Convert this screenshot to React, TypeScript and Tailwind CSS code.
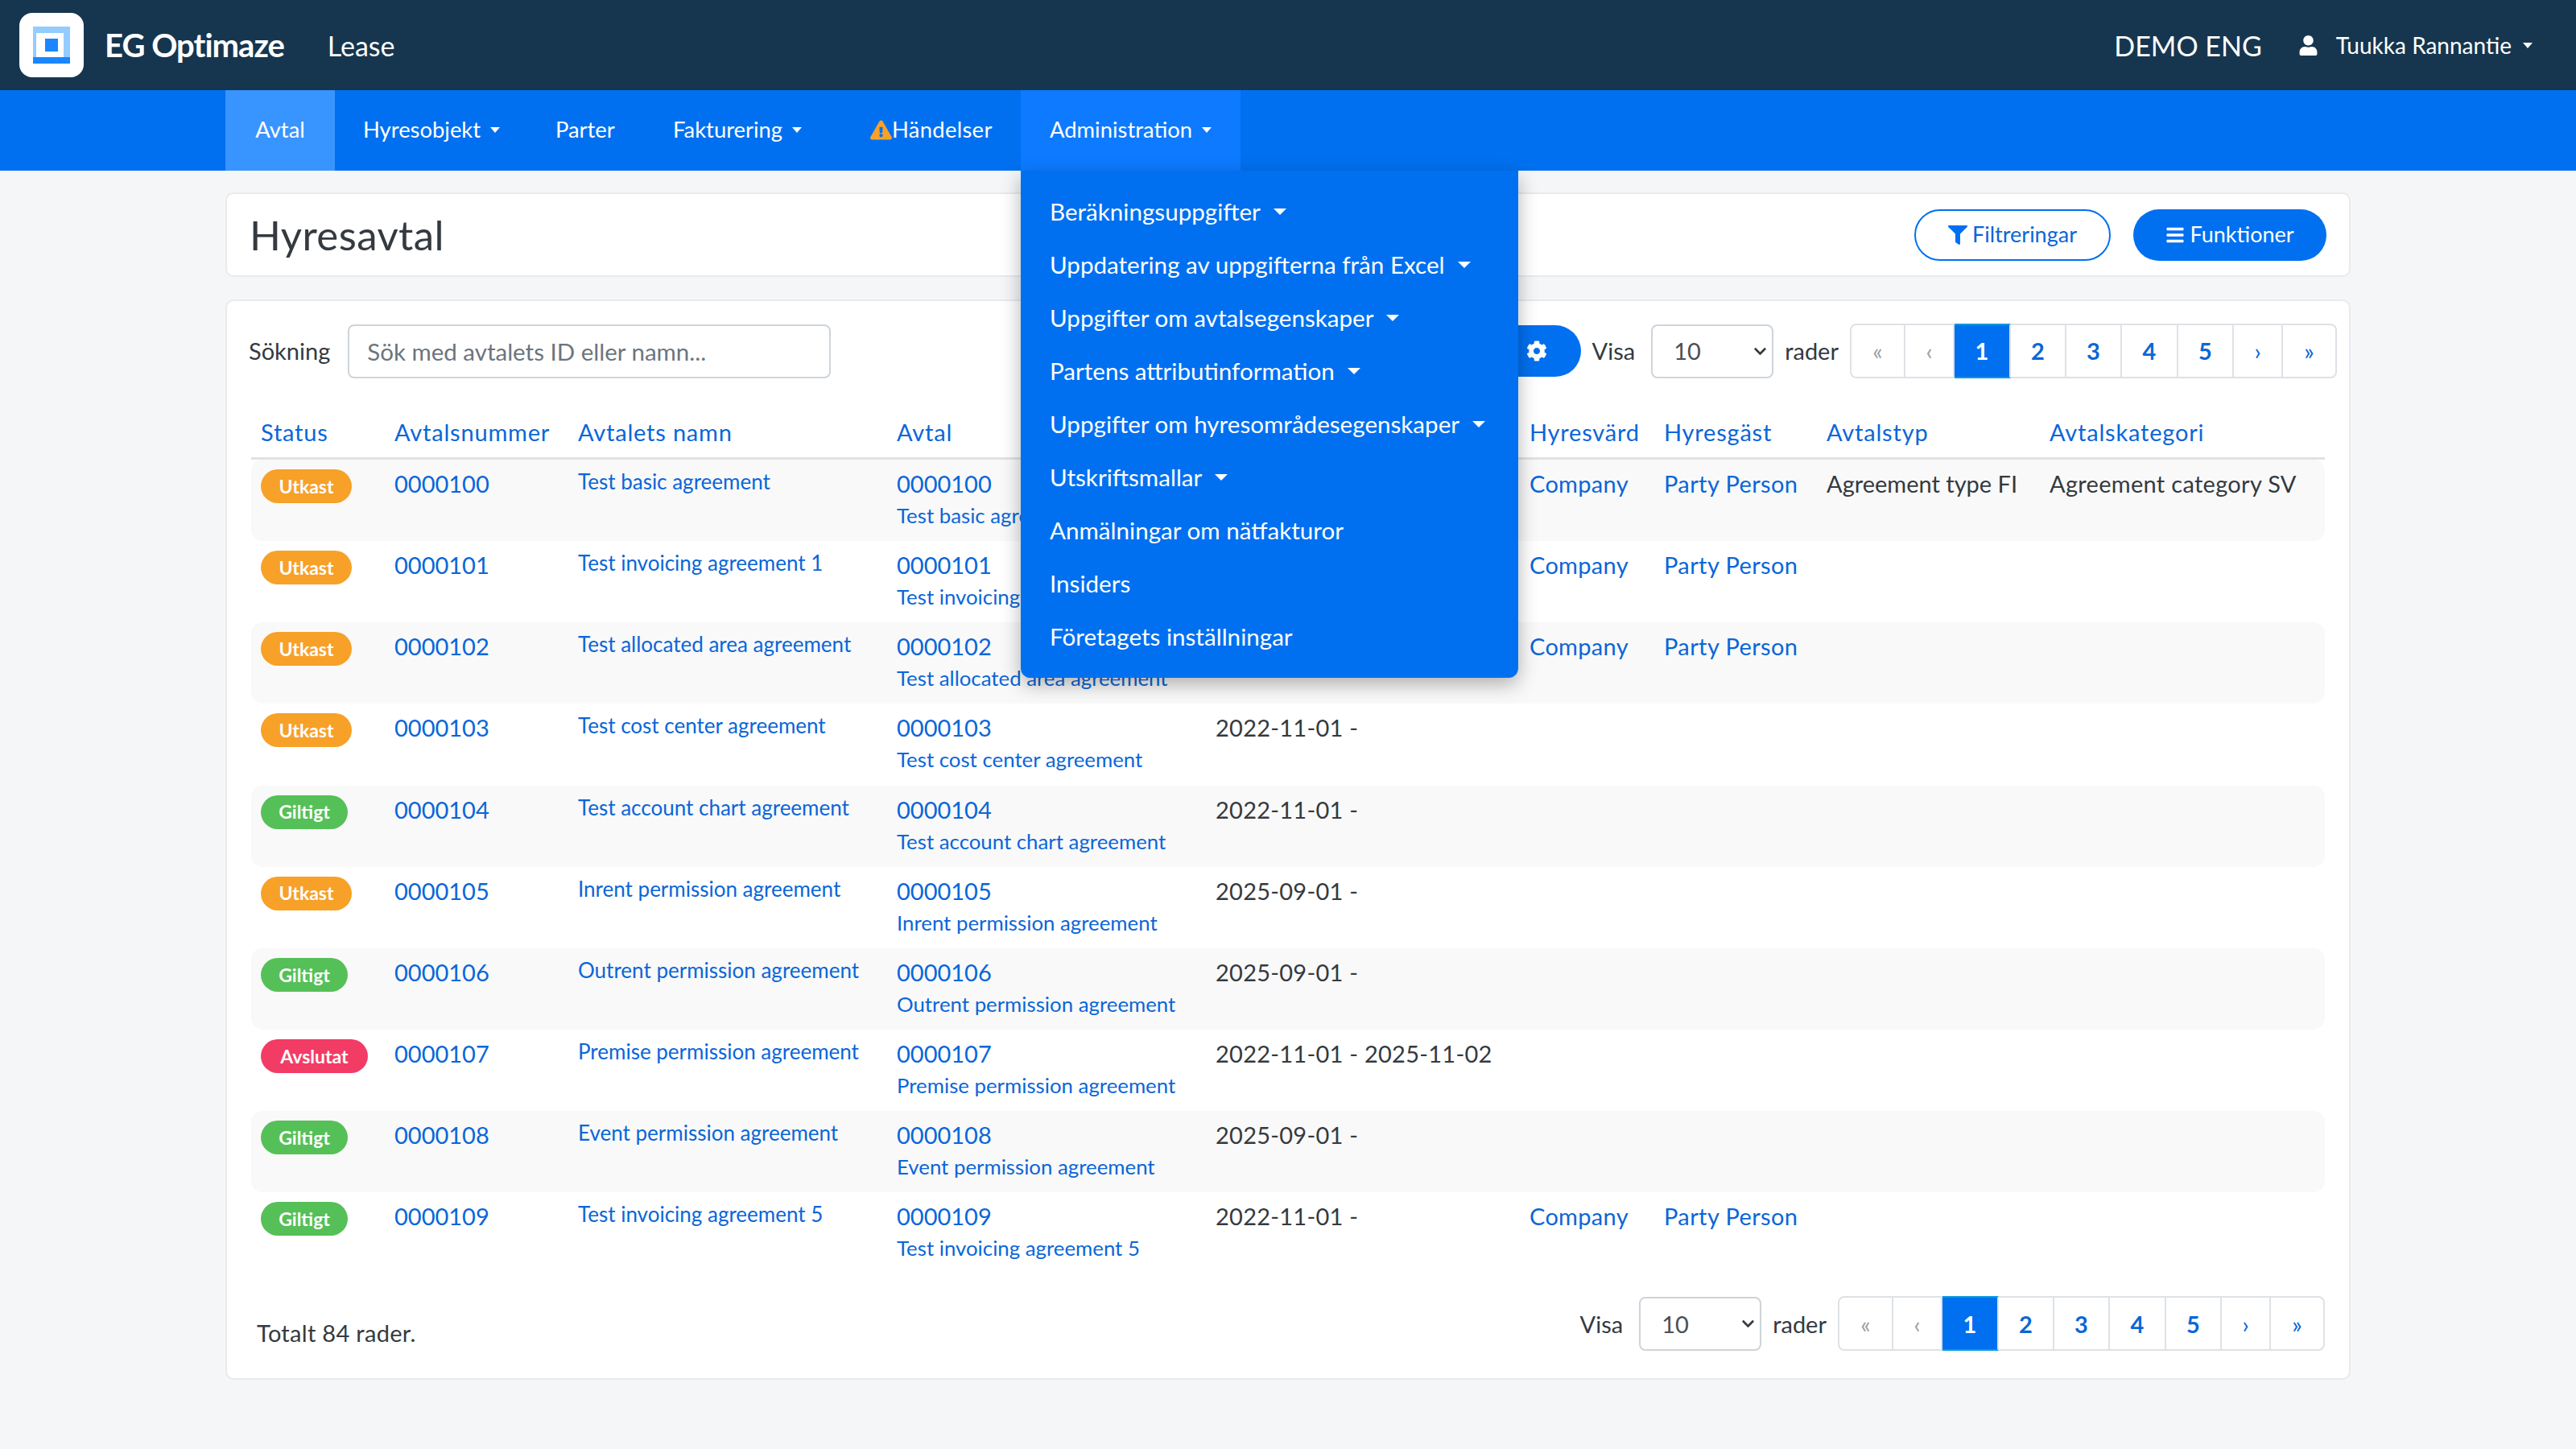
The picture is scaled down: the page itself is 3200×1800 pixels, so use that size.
import { FaCog, FaChevronDown, FaExclamationTriangle, FaFilter, FaUser, FaBars } from "react-icons/fa";

type Row = {
  status: "Utkast" | "Giltigt" | "Avslutat";
  id: string;
  name: string;
  period?: string;
  landlord?: boolean;
  type?: string;
  category?: string;
};

const rows: Row[] = [
  { status: "Utkast", id: "0000100", name: "Test basic agreement", landlord: true, type: "Agreement type FI", category: "Agreement category SV" },
  { status: "Utkast", id: "0000101", name: "Test invoicing agreement 1", landlord: true },
  { status: "Utkast", id: "0000102", name: "Test allocated area agreement", landlord: true },
  { status: "Utkast", id: "0000103", name: "Test cost center agreement", period: "2022-11-01 -" },
  { status: "Giltigt", id: "0000104", name: "Test account chart agreement", period: "2022-11-01 -" },
  { status: "Utkast", id: "0000105", name: "Inrent permission agreement", period: "2025-09-01 -" },
  { status: "Giltigt", id: "0000106", name: "Outrent permission agreement", period: "2025-09-01 -" },
  { status: "Avslutat", id: "0000107", name: "Premise permission agreement", period: "2022-11-01 - 2025-11-02" },
  { status: "Giltigt", id: "0000108", name: "Event permission agreement", period: "2025-09-01 -" },
  { status: "Giltigt", id: "0000109", name: "Test invoicing agreement 5", period: "2022-11-01 -", landlord: true },
];

const menuItems = [
  { label: "Beräkningsuppgifter", caret: true },
  { label: "Uppdatering av uppgifterna från Excel", caret: true },
  { label: "Uppgifter om avtalsegenskaper", caret: true },
  { label: "Partens attributinformation", caret: true },
  { label: "Uppgifter om hyresområdesegenskaper", caret: true },
  { label: "Utskriftsmallar", caret: true },
  { label: "Anmälningar om nätfakturor", caret: false },
  { label: "Insiders", caret: false },
  { label: "Företagets inställningar", caret: false },
];

const badgeColors = {
  Utkast: "bg-[#f7a128] w-[113px]",
  Giltigt: "bg-[#55c057] w-[108px]",
  Avslutat: "bg-[#f23c65] w-[133px]",
};

const gridCols = "grid grid-cols-[166px_228px_396px_396px_390px_167px_202px_277px_354px]";

function Caret({ className = "ml-[12px] border-x-[6px] border-t-[7px]" }: { className?: string }) {
  return <span className={`inline-block border-x-transparent border-t-white align-middle ${className}`} />;
}

function RowsSelect() {
  return (
    <div className="relative">
      <select defaultValue="10" className="h-[67px] w-[152px] appearance-none rounded-[8px] border-2 border-[#ced4da] bg-white pl-[26px] text-[29px] text-[#495057]">
        <option>10</option>
        <option>25</option>
        <option>50</option>
      </select>
      <FaChevronDown className="pointer-events-none absolute right-[8px] top-[25px] text-[17px] text-[#343a40]" />
    </div>
  );
}

function Pagination() {
  const cells = [
    { t: "«", w: "w-[67px]", c: "text-[#9aa0a6]" },
    { t: "‹", w: "w-[61px]", c: "text-[#9aa0a6]" },
    { t: "1", w: "w-[70px]", c: "-my-[2px] border-y-2 border-y-[#0a9be0] bg-[#0070f0] text-white font-bold" },
    { t: "2", w: "w-[69px]", c: "text-[#0a66d8] font-bold" },
    { t: "3", w: "w-[69px]", c: "text-[#0a66d8] font-bold" },
    { t: "4", w: "w-[70px]", c: "text-[#0a66d8] font-bold" },
    { t: "5", w: "w-[69px]", c: "text-[#0a66d8] font-bold" },
    { t: "›", w: "w-[61px]", c: "text-[#0a66d8]" },
    { t: "»", w: "w-[65px]", c: "text-[#0a66d8]" },
  ];
  return (
    <div className="flex h-[68px] rounded-[8px] border-2 border-[#dee2e6]">
      {cells.map((cell, i) => (
        <div key={i} className={`flex items-center justify-center border-r-2 border-r-[#dee2e6] text-[29px] last:border-r-0 ${cell.w} ${cell.c}`}>
          {cell.t}
        </div>
      ))}
    </div>
  );
}

function TableRow({ row, index }: { row: Row; index: number }) {
  return (
    <div className={`${gridCols} h-[101.15px] rounded-[14px] pt-[10px] text-[#0a66d8] ${index % 2 === 0 ? "bg-[#f9f9f9]" : ""}`}>
      <div className="pl-[12px] pt-[2px]">
        <span className={`flex h-[42px] items-center justify-center rounded-full text-[23px] font-bold text-white ${badgeColors[row.status]}`}>{row.status}</span>
      </div>
      <div className="pl-[12px] leading-[40px]">{row.id}</div>
      <div className="pl-[12px] text-[26px] leading-[35px]">{row.name}</div>
      <div className="pl-[12px]">
        <div className="leading-[40px]">{row.id}</div>
        <div className="whitespace-nowrap text-[25.8px] leading-[38px]">{row.name}</div>
      </div>
      <div className="whitespace-nowrap pl-[12px] leading-[40px] tracking-[0.25px] text-[#343a40]">{row.period}</div>
      <div className="pl-[12px] leading-[40px] tracking-[0.3px]">{row.landlord && "Company"}</div>
      <div className="pl-[12px] leading-[40px] tracking-[0.4px]">{row.landlord && "Party Person"}</div>
      <div className="pl-[12px] leading-[40px] text-[#343a40]">{row.type}</div>
      <div className="whitespace-nowrap pl-[12px] leading-[40px] tracking-[0.3px] text-[#343a40]">{row.category}</div>
    </div>
  );
}

export default function App() {
  return (
    <div className="relative min-h-[1800px] bg-[#f5f6f8] font-['Lato','Noto_Sans',sans-serif] text-[29px] text-[#343a40]">
      <header className="flex h-[112px] items-center bg-[#16364f] pl-[24px] pr-[54px] text-white">
        <div className="flex h-[80px] w-[80px] items-center justify-center rounded-[16px] bg-white">
          <svg width="46" height="46" viewBox="0 0 46 46">
            <rect width="46" height="46" fill="#93ccff" />
            <rect x="4" y="8" width="34" height="30" fill="#fff" />
            <rect y="38" width="46" height="8" fill="#1a86ff" />
            <rect x="15" y="15" width="16" height="16" fill="#1a86ff" />
          </svg>
        </div>
        <span className="ml-[26px] text-[40px] font-bold tracking-[-1px]">EG Optimaze</span>
        <span className="ml-[54px] text-[34px]">Lease</span>
        <span className="ml-auto text-[34px]">DEMO ENG</span>
        <FaUser className="ml-[45px] text-[25px]" />
        <span className="ml-[22px] text-[28px]">Tuukka Rannantie</span>
        <Caret className="ml-[14px] border-x-[6px] border-t-[7px]" />
      </header>

      <nav className="flex h-[100px] bg-[#0070f0] pb-[2px] pl-[280px] text-[27.4px] text-white">
        <div className="-mb-[2px] flex w-[136px] items-center justify-center bg-[#3894ff] pb-[2px]">Avtal</div>
        <div className="flex w-[238px] items-center pl-[35px]">Hyresobjekt<Caret /></div>
        <div className="flex w-[147px] items-center pl-[36px]">Parter</div>
        <div className="flex w-[233px] items-center pl-[35px]">Fakturering<Caret /></div>
        <div className="flex w-[234px] items-center pl-[47px]">
          <FaExclamationTriangle className="text-[27px] text-[#f7a128]" />
          <span className="tracking-[0.3px]">Händelser</span>
        </div>
        <div className="-mb-[2px] flex w-[273px] items-center bg-[#0d7aff] pb-[2px] pl-[36px]">Administration<Caret /></div>
      </nav>

      <main className="mx-auto w-[2640px] pt-[27px]">
        <section className="flex h-[105px] items-center justify-between rounded-[10px] border-2 border-[#e9eaec] bg-white px-[28px]">
          <h1 className="text-[51px] leading-none font-normal tracking-[0.4px]">Hyresavtal</h1>
          <div className="flex gap-[28px]">
            <button className="flex h-[64px] w-[244px] items-center justify-center gap-[6px] rounded-full border-2 border-[#0070f0] text-[27px] text-[#0a66d8]">
              <FaFilter className="text-[24px] text-[#0070f0]" />
              Filtreringar
            </button>
            <button className="flex h-[64px] w-[240px] items-center justify-center gap-[6px] rounded-full bg-[#0070f0] text-[27px] text-white">
              <FaBars className="text-[24px]" />
              Funktioner
            </button>
          </div>
        </section>

        <section className="mt-[28px] h-[1342px] rounded-[10px] border-2 border-[#e9eaec] bg-white px-[30px] pt-[28px]">
          <div className="flex h-[68px] items-center justify-between">
            <div className="-ml-[3px] flex items-center gap-[22px]">
              <span>Sökning</span>
              <input
                placeholder="Sök med avtalets ID eller namn..."
                className="h-[67px] w-[600px] rounded-[8px] border-2 border-[#ced4da] px-[22px] text-[29.5px] placeholder:text-[#6c757d]"
              />
            </div>
            <div className="-mr-[15px] flex items-center">
              <button className="mr-[14px] flex h-[64px] w-[150px] items-center justify-end rounded-full bg-[#0070f0] pr-[42px] text-white">
                <FaCog className="text-[26px]" />
              </button>
              <span className="mr-[20px]">Visa</span>
              <RowsSelect />
              <span className="mx-[14px]">rader</span>
              <Pagination />
            </div>
          </div>

          <div className="mt-[30px] text-[#0a66d8]">
            <div className={`${gridCols} h-[71px] items-center border-b-[3px] border-[#dee2e6] pt-[6px] tracking-[0.8px]`}>
              {["Status", "Avtalsnummer", "Avtalets namn", "Avtal", "", "Hyresvärd", "Hyresgäst", "Avtalstyp", "Avtalskategori"].map((h, i) => (
                <div key={i} className="pl-[12px]">{h}</div>
              ))}
            </div>
            {rows.map((row, i) => (
              <TableRow key={row.id} row={row} index={i} />
            ))}
          </div>

          <div className="mt-[28px] flex items-center justify-between">
            <span className="ml-[7px] mt-[22px] tracking-[0.3px]">Totalt 84 rader.</span>
            <div className="flex items-center">
              <span className="mr-[20px]">Visa</span>
              <RowsSelect />
              <span className="mx-[14px]">rader</span>
              <Pagination />
            </div>
          </div>
        </section>
      </main>

      <div className="absolute left-[1268px] top-[212px] h-[630px] w-[618px] rounded-b-[12px] bg-[#0070f0] pl-[36px] pt-[18px] text-[29.6px] text-white shadow-[0_8px_24px_rgba(0,0,0,0.3)]">
        {menuItems.map((item) => (
          <div key={item.label} className="flex h-[66px] items-center whitespace-nowrap">
            {item.label}
            {item.caret && <Caret className="ml-[16px] border-x-[8px] border-t-[8px]" />}
          </div>
        ))}
      </div>
    </div>
  );
}
